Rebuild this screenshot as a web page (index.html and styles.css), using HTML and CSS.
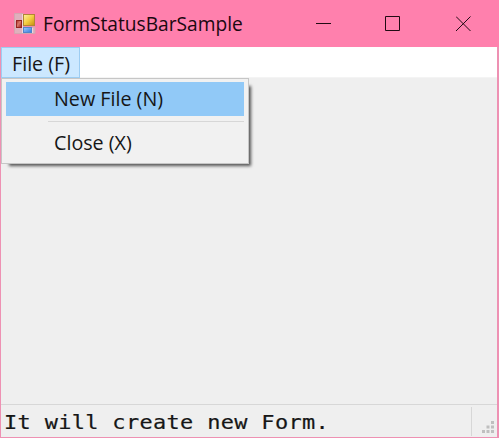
FILE: index.html
```html
<!DOCTYPE html>
<html lang="en">
<head>
<meta charset="utf-8">
<title>FormStatusBarSample</title>
<link rel="stylesheet" href="styles.css">
</head>
<body>
<div class="window">
  <header class="titlebar">
    <svg class="app-icon" width="22" height="22" viewBox="0 0 22 22">
      <defs>
        <linearGradient id="gold" x1="0" y1="0" x2="1" y2="1"><stop offset="0" stop-color="#fff3a0"/><stop offset=".5" stop-color="#f3cd42"/><stop offset="1" stop-color="#c58d0c"/></linearGradient>
        <linearGradient id="red" x1="0" y1="0" x2="1" y2="1"><stop offset="0" stop-color="#a92c22"/><stop offset=".45" stop-color="#d9786b"/><stop offset="1" stop-color="#991c18"/></linearGradient>
        <linearGradient id="blue" x1="0" y1="0" x2="1" y2="1"><stop offset="0" stop-color="#9cccff"/><stop offset="1" stop-color="#3478d8"/></linearGradient>
      </defs>
      <path d="M.5.5H9V20.500H.5Z M9 14H21V20.500H9Z" fill="#dfb0bd" stroke="#d5a5af"/>
      <path d="M1.500 7.500H8M8.500 1V20M18.500 15V20" stroke="#eed5dc"/>
      <rect x="9.500" y="1.500" width="11" height="11" fill="url(#gold)" stroke="#b28635"/>
      <rect x="2.500" y="7.500" width="5" height="7" fill="url(#red)" stroke="#972621"/>
      <rect x="9.500" y="14.500" width="8" height="5" fill="url(#blue)" stroke="#5284ca"/>
    </svg>
    <h1 class="title">FormStatusBarSample</h1>
    <div class="controls">
      <svg width="16" height="16"><path d="M0 7.500H15"/></svg>
      <svg class="maximize" width="16" height="16"><path d="M.5.5H14.500V14.500H.5Z"/></svg>
      <svg width="16" height="16"><path d="M0 .5L14.500 15M14.500 .5L0 15"/></svg>
    </div>
  </header>
  <nav class="menubar">
    <div class="menu-button"><span>File (F)</span></div>
    <div class="dropdown">
      <div class="item active"><span>New File (N)</span></div>
      <div class="separator"></div>
      <div class="item"><span>Close (X)</span></div>
    </div>
  </nav>
  <main class="client"></main>
  <footer class="statusbar">
    <div class="status"><span>It will create new Form.</span></div>
    <svg class="grip" width="24" height="30" fill="#bfbfbf">
      <path d="M19 16h3v3h-3zM14.500 20.500h3v3h-3zM19 20.500h3v3h-3zM10 25h3v3h-3zM14.500 25h3v3h-3zM19 25h3v3h-3z"/>
    </svg>
  </footer>
</div>
</body>
</html>
```
FILE: styles.css
```css
* { box-sizing: border-box; }
body { margin: 0; overflow: hidden; background: #f0f0f0; color: #161616; font-family: "Open Sans", "Noto Sans", sans-serif; }
.window { width: 499px; height: 438px; display: flex; flex-direction: column; border: 1px solid #ee91b3; border-right-width: 2px; border-top: 0; background: #efefef; }
.titlebar { height: 47px; flex: none; margin: 0 -2px 0 -1px; background: #ff80ad; display: flex; align-items: center; padding-left: 14px; }
.app-icon { flex: none; margin-right: 7px; }
.title { margin: 0; font-size: 20.5px; font-weight: 400; line-height: 49px; width: 200px; white-space: nowrap; color: #1b0810; transform: scaleX(.935); transform-origin: left; }
.controls { margin-left: auto; display: flex; gap: 54px; padding-right: 27px; }
.controls svg { fill: none; stroke: #210b13; stroke-width: 1; }
.controls .maximize { margin: 0 1px 0 -1px; }
.menubar { height: 31px; flex: none; background: #fff; position: relative; border-bottom: 1px solid #f4f4f4; font-size: 20px; }
.menu-button { width: 79px; height: 31px; background: #cce8ff; border: 1px solid #9dcdf2; padding-left: 10px; line-height: 32px; white-space: nowrap; }
.menu-button span, .item span, .status span { display: inline-block; transform: scaleX(.985); transform-origin: left; }
.dropdown { position: absolute; top: 31px; left: 0; width: 248px; height: 86px; padding: 3px 4px 4px; background: #f1f1f1; border: 1px solid #c6c6c6; box-shadow: 5px 5px 3px -3px rgba(0,0,0,.65); }
.item { height: 34px; line-height: 34px; padding-left: 48px; white-space: nowrap; }
.item:last-child { line-height: 32px; }
.active { background: #91c9f7; }
.separator { height: 1px; margin: 5px 0 5px 42px; background: #d7d7d7; }
.client { flex: 1; }
.statusbar { height: 33px; flex: none; display: flex; border-top: 1px solid #d7d7d7; }
.status { width: 471px; flex: none; height: 29px; margin-top: 2px; padding-left: 3px; border-right: 1px solid #d7d7d7; font: 19.5px/31px "DejaVu Sans Mono", monospace; letter-spacing: .3px; white-space: nowrap; -webkit-text-stroke: .2px; }
.status span { transform: scaleX(1.125); }
.grip { flex: none; }
```
